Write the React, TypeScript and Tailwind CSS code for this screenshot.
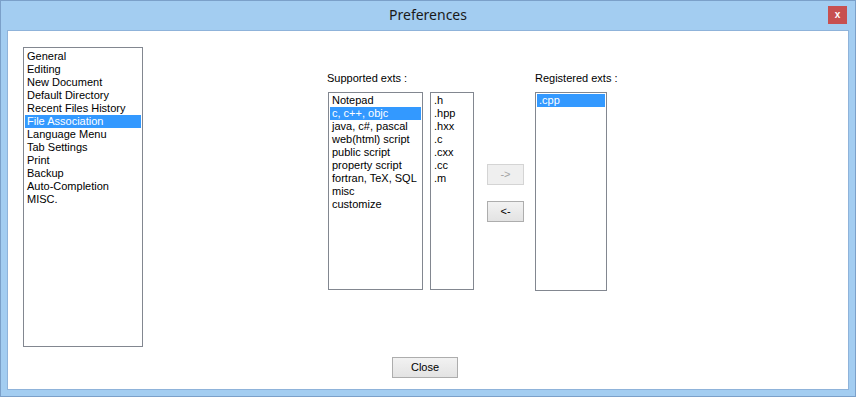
import React from 'react'

const categories = [
  'General',
  'Editing',
  'New Document',
  'Default Directory',
  'Recent Files History',
  'File Association',
  'Language Menu',
  'Tab Settings',
  'Print',
  'Backup',
  'Auto-Completion',
  'MISC.',
]

const langs = [
  'Notepad',
  'c, c++, objc',
  'java, c#, pascal',
  'web(html) script',
  'public script',
  'property script',
  'fortran, TeX, SQL',
  'misc',
  'customize',
]

const exts = ['.h', '.hpp', '.hxx', '.c', '.cxx', '.cc', '.m']

const ListRow: React.FC<{ label: string; selected?: boolean }> = ({ label, selected }) => (
  <div
    className={`h-[13px] leading-[13px] pl-[2px] whitespace-nowrap ${
      selected ? 'bg-[#3399ff] text-white' : 'text-black'
    }`}
  >
    {label}
  </div>
)

const WinButton: React.FC<{ label: string; disabled?: boolean; className?: string }> = ({
  label,
  disabled,
  className = '',
}) => (
  <div
    className={`
      flex items-center justify-center border text-[11px]
      ${
        disabled
          ? 'border-[#d4d4d4] bg-[#efefef] text-[#a3a3a3]'
          : 'border-[#adadad] bg-gradient-to-b from-[#f2f2f2] to-[#e3e3e3] text-black'
      }
      ${className}
    `}
  >
    {label}
  </div>
)

export default function App() {
  return (
    <div
      className="w-[856px] h-[397px] flex flex-col bg-[#a3cdf1] border border-[#7ba0c9] text-[11px]"
      style={{ fontFamily: '"Liberation Sans", Arial, sans-serif' }}
    >
      {/* Title bar */}
      <div className="relative h-[29px] flex items-center justify-center">
        <span
          className="text-[14px] text-[#1a1a1a] leading-none -mt-[1px]"
          style={{ fontFamily: '"Noto Sans", sans-serif' }}
        >
          Preferences
        </span>
        <div className="absolute top-[5px] right-[8px] w-[19px] h-[18px] bg-[#c75050] flex items-center justify-center text-white text-[10px] font-bold leading-none">
          x
        </div>
      </div>

      {/* Client area */}
      <div className="mx-[6px] h-[360px] border border-[#8fb3da] bg-white flex flex-col">
        <div className="flex pl-[15px] pt-[16px]">
          {/* Category list */}
          <div className="w-[120px] h-[300px] border border-[#828790] p-[1px] pt-[2px]">
            {categories.map((c) => (
              <ListRow key={c} label={c} selected={c === 'File Association'} />
            ))}
          </div>

          {/* Supported exts */}
          <div className="ml-[185px] mt-[25px] flex flex-col">
            <div className="h-[13px] leading-[13px] ml-[-1px]">Supported exts :</div>
            <div className="mt-[7px] flex gap-[7px]">
              <div className="w-[95px] h-[198px] border border-[#828790] p-[1px]">
                {langs.map((l) => (
                  <ListRow key={l} label={l} selected={l === 'c, c++, objc'} />
                ))}
              </div>
              <div className="w-[44px] h-[198px] border border-[#828790] p-[1px]">
                {exts.map((e) => (
                  <ListRow key={e} label={e} />
                ))}
              </div>
            </div>
          </div>

          {/* Move buttons */}
          <div className="ml-[13px] pt-[117px] flex flex-col gap-[16px]">
            <WinButton label="->" disabled className="w-[37px] h-[21px]" />
            <WinButton label="<-" className="w-[37px] h-[21px]" />
          </div>

          {/* Registered exts */}
          <div className="ml-[11px] mt-[25px] flex flex-col">
            <div className="h-[13px] leading-[13px]">Registered exts :</div>
            <div className="mt-[7px] w-[72px] h-[199px] border border-[#828790] p-[1px]">
              <ListRow label=".cpp" selected />
            </div>
          </div>
        </div>

        {/* Footer */}
        <div className="mt-auto mb-[11px] pl-[384px]">
          <WinButton label="Close" className="w-[66px] h-[21px]" />
        </div>
      </div>
    </div>
  )
}
